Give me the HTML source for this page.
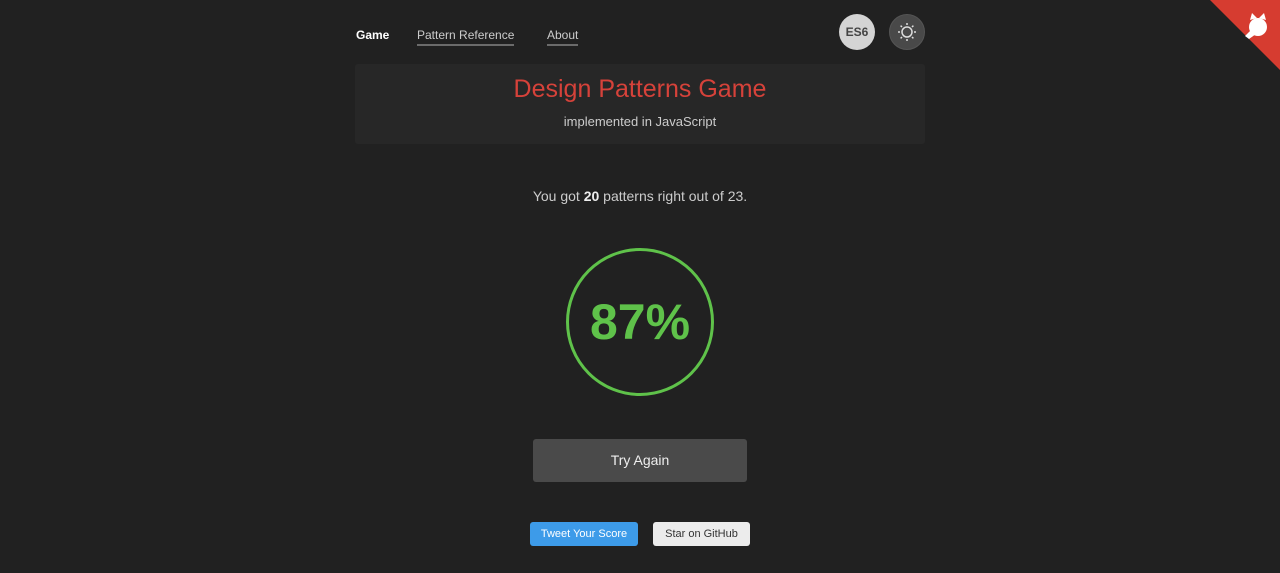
<!DOCTYPE html>
<html><head><style>
body{margin:0;background:#212121;width:1280px;height:573px;overflow:hidden;position:relative;font-family:"Liberation Sans",sans-serif;color:#ddd}
.a{position:absolute}
.nav{top:28px;font-size:12px;color:#ccc}
.u{border-bottom:2px solid #6b6b6b;padding-bottom:2px}
</style></head><body>
<div class="a nav" style="left:356px;color:#fff;font-weight:bold">Game</div>
<div class="a nav u" style="left:417px">Pattern Reference</div>
<div class="a nav u" style="left:547px">About</div>
<div class="a" style="left:839px;top:14px;width:36px;height:36px;border-radius:50%;background:#d4d4d4;color:#444;font-weight:bold;font-size:12px;line-height:36px;text-align:center">ES6</div>
<div class="a" style="left:889px;top:14px;width:34px;height:34px;border-radius:50%;background:#494949;border:1px solid #555">
<svg width="34" height="34" viewBox="0 0 34 34" fill="none" stroke="#ddd" stroke-width="1.5"><circle cx="17" cy="17" r="5"/><path d="M17 8v2M17 24v2M8 17h2M24 17h2M10.6 10.6l1.4 1.4M22 22l1.4 1.4M10.6 23.4l1.4-1.4M22 12l1.4-1.4"/></svg></div>
<svg class="a" style="left:1200px;top:0" width="80" height="80"><polygon points="10,0 80,0 80,70" fill="#d63c30"/><g fill="#fff"><circle cx="58" cy="27" r="9"/><path d="M50 20l2-7 5 5zM66 20l-2-7-5 5zM51 30l-6 6 4 3 7-5z"/></g></svg>
<div class="a" style="left:355px;top:64px;width:570px;height:80px;background:#272727;border-radius:3px;text-align:center">
<div style="color:#d6423a;font-size:25px;margin-top:11px">Design Patterns Game</div>
<div style="color:#ccc;font-size:13px;margin-top:10px">implemented in JavaScript</div></div>
<div class="a" style="left:0;width:1280px;top:188px;text-align:center;font-size:14px;color:#ccc">You got <b style="color:#eee">20</b> patterns right out of 23.</div>
<div class="a" style="left:566px;top:248px;width:142px;height:142px;border:3px solid #5fc24a;border-radius:50%;text-align:center;line-height:142px;color:#5fc24a;font-size:50px;font-weight:bold">87%</div>
<div class="a" style="left:533px;top:439px;width:214px;height:43px;background:#4a4a4a;border-radius:3px;text-align:center;line-height:43px;font-size:14px;color:#eee">Try Again</div>
<div class="a" style="left:530px;top:522px;width:108px;height:24px;background:#3d9be9;border-radius:3px;text-align:center;line-height:24px;font-size:11px;color:#fff">Tweet Your Score</div>
<div class="a" style="left:653px;top:522px;width:97px;height:24px;background:#ececec;border-radius:3px;text-align:center;line-height:24px;font-size:11px;color:#333">Star on GitHub</div>
</body></html>
